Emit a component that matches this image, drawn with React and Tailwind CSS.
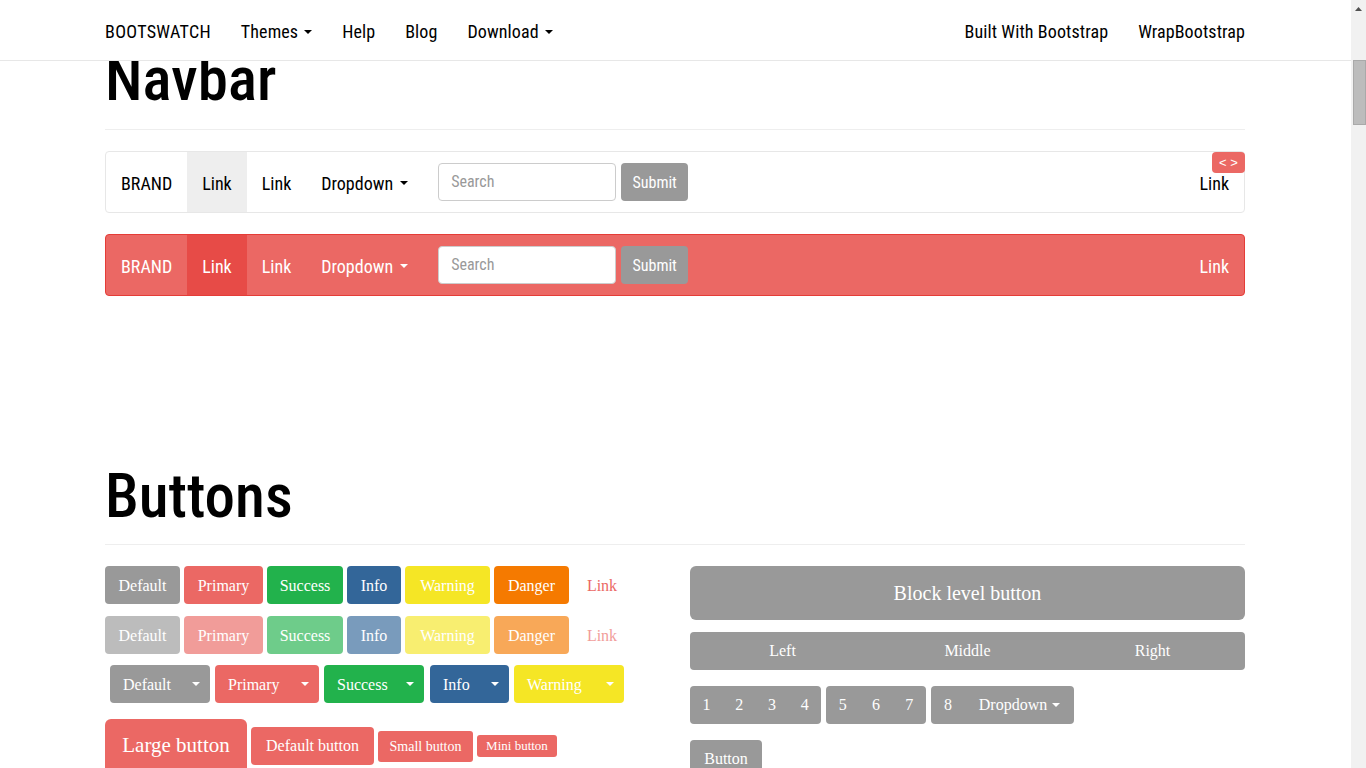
import React from "react";

const NARROW = "font-['Roboto_Condensed','Liberation_Sans',sans-serif]";
const SERIF = "font-['Liberation_Serif','DejaVu_Serif',serif]";

function Caret({ className = "" }) {
  return (
    <svg width="8" height="4" viewBox="0 0 8 4" className={"inline-block " + className}>
      <path d="M0 0 L8 0 L4 4 Z" fill="currentColor" />
    </svg>
  );
}

function Btn({ w, bg, children, className = "" }) {
  return (
    <div
      className={`${w} ${bg} h-[38px] rounded-[4px] flex items-center justify-center text-white text-[16px] pt-[1px] ${className}`}
    >
      {children}
    </div>
  );
}

function SplitBtn({ w, bg, label, className = "" }) {
  return (
    <div className={`${w} ${bg} h-[38px] rounded-[4px] flex items-center text-white text-[16px] ${className}`}>
      <span className="flex-1 pl-[13px] pt-[1px]">{label}</span>
      <span className="w-[27px] flex items-center justify-center pr-[2px]">
        <Caret />
      </span>
    </div>
  );
}

function ButtonRow({ faded }) {
  const o = faded ? "opacity-[0.65]" : "";
  return (
    <div className={`flex gap-[4px] ${o}`}>
      <Btn w="w-[75px]" bg="bg-[#999999]">Default</Btn>
      <Btn w="w-[79px]" bg="bg-[#eb6864]">Primary</Btn>
      <Btn w="w-[76px]" bg="bg-[#22b24c]">Success</Btn>
      <Btn w="w-[54px]" bg="bg-[#336699]">Info</Btn>
      <Btn w="w-[85px]" bg="bg-[#f5e625]">Warning</Btn>
      <Btn w="w-[75px]" bg="bg-[#f57a00]">Danger</Btn>
      <div className="w-[56px] h-[38px] flex items-center justify-center text-[#eb6864] text-[16px] ml-[1px] pt-[1px]">
        Link
      </div>
    </div>
  );
}

function DemoNavbar({ inverse }) {
  const wrap = inverse
    ? "bg-[#eb6864] border-[#e53c37] text-white"
    : "bg-white border-[#e7e7e7] text-black";
  const active = inverse ? "bg-[#e74b47]" : "bg-[#eeeeee]";
  return (
    <div className={`relative h-[62px] border rounded-[4px] flex items-stretch ${wrap} ${NARROW} font-normal text-[18px]`}>
      <div className="px-[15px] pt-[2px] flex items-center">BRAND</div>
      <div className={`px-[15px] pt-[2px] flex items-center ${active}`}>Link</div>
      <div className="px-[15px] pt-[2px] flex items-center">Link</div>
      <div className="px-[15px] pt-[2px] flex items-center gap-[7px]">
        Dropdown <Caret className={inverse ? "text-white" : "text-black"} />
      </div>
      <div className="ml-[15px] flex items-center gap-[5px]">
        <div className="w-[178px] h-[38px] rounded-[4px] border border-[#cccccc] bg-white flex items-center pl-[12px] text-[#999999] text-[16px]">
          Search
        </div>
        <div className="w-[67px] h-[38px] rounded-[4px] bg-[#999999] flex items-center justify-center pt-[2px] text-white text-[16px]">
          Submit
        </div>
      </div>
      <div className="flex-1" />
      <div className="px-[15px] pt-[2px] flex items-center">Link</div>
      {!inverse && (
        <div className="absolute top-0 right-[-1px] w-[33px] h-[21px] rounded-[4px] bg-[#eb6864] text-white text-[13px] flex items-center justify-center font-['Liberation_Sans',sans-serif]">
          &lt; &gt;
        </div>
      )}
    </div>
  );
}

export default function App() {
  return (
    <div className="w-[1366px] h-[768px] overflow-hidden flex bg-white">
      <div className="relative w-[1351px] h-[768px] overflow-hidden">
        {/* fixed top navbar */}
        <div className={`absolute top-0 left-0 right-0 z-10 h-[61px] bg-white border-b border-[#e7e7e7] ${NARROW} font-normal text-[18px] tracking-[0.1px] text-black`}>
          <div className="w-[1140px] ml-[105px] h-[60px] pt-[3px] flex items-center">
            <div className="pr-[15px] tracking-[0.3px]">BOOTSWATCH</div>
            <div className="px-[15px] flex items-center gap-[6px]">
              Themes <Caret />
            </div>
            <div className="px-[15px]">Help</div>
            <div className="px-[15px]">Blog</div>
            <div className="px-[15px] flex items-center gap-[6px]">
              Download <Caret />
            </div>
            <div className="flex-1" />
            <div className="px-[15px]">Built With Bootstrap</div>
            <div className="pl-[15px]">WrapBootstrap</div>
          </div>
        </div>

        {/* page content */}
        <div className="w-[1140px] ml-[105px]">
          <h1 className={`${NARROW} font-medium text-[61px] leading-[61px] text-black mt-[49px]`}>Navbar</h1>
          <div className="mt-[19px] border-t border-[#eeeeee]" />
          <div className="mt-[21px]">
            <DemoNavbar />
          </div>
          <div className="mt-[21px]">
            <DemoNavbar inverse />
          </div>

          <h1 className={`${NARROW} font-medium text-[61px] leading-[61px] text-black mt-[170px]`}>Buttons</h1>
          <div className="mt-[17px] border-t border-[#eeeeee]" />

          <div className={`mt-[21px] flex ${SERIF}`}>
            <div className="w-[555px] flex flex-col">
              <ButtonRow />
              <div className="mt-[12px]">
                <ButtonRow faded />
              </div>
              <div className="mt-[11px] ml-[5px] flex gap-[5px]">
                <SplitBtn w="w-[100px]" bg="bg-[#999999]" label="Default" />
                <SplitBtn w="w-[104px]" bg="bg-[#eb6864]" label="Primary" />
                <SplitBtn w="w-[100px]" bg="bg-[#22b24c]" label="Success" />
                <SplitBtn w="w-[79px]" bg="bg-[#336699]" label="Info" className="ml-[1px]" />
                <SplitBtn w="w-[110px]" bg="bg-[#f5e625]" label="Warning" />
              </div>
              <div className="mt-[16px] flex items-center gap-[4px] text-white">
                <div className="w-[142px] h-[54px] rounded-[6px] bg-[#eb6864] flex items-center justify-center text-[21px]">
                  Large button
                </div>
                <div className="w-[123px] h-[38px] rounded-[4px] bg-[#eb6864] flex items-center justify-center text-[16px]">
                  Default button
                </div>
                <div className="w-[95px] h-[31px] rounded-[3px] bg-[#eb6864] flex items-center justify-center text-[14px]">
                  Small button
                </div>
                <div className="w-[80px] h-[22px] rounded-[3px] bg-[#eb6864] flex items-center justify-center text-[13px]">
                  Mini button
                </div>
              </div>
            </div>

            <div className="w-[555px] ml-[30px] flex flex-col text-white">
              <div className="h-[54px] rounded-[6px] bg-[#999999] flex items-center justify-center text-[20px]">
                Block level button
              </div>
              <div className="mt-[12px] h-[38px] rounded-[4px] bg-[#999999] flex text-[16px]">
                <div className="flex-1 flex items-center justify-center">Left</div>
                <div className="flex-1 flex items-center justify-center">Middle</div>
                <div className="flex-1 flex items-center justify-center">Right</div>
              </div>
              <div className="mt-[16px] flex gap-[5px] text-[16px]">
                <div className="w-[131px] h-[38px] rounded-[4px] bg-[#999999] flex">
                  {["1", "2", "3", "4"].map((n) => (
                    <div key={n} className="flex-1 flex items-center justify-center">{n}</div>
                  ))}
                </div>
                <div className="w-[100px] h-[38px] rounded-[4px] bg-[#999999] flex">
                  {["5", "6", "7"].map((n) => (
                    <div key={n} className="flex-1 flex items-center justify-center">{n}</div>
                  ))}
                </div>
                <div className="w-[143px] h-[38px] rounded-[4px] bg-[#999999] flex">
                  <div className="w-[34px] flex items-center justify-center">8</div>
                  <div className="flex-1 flex items-center justify-center gap-[5px]">
                    Dropdown <Caret />
                  </div>
                </div>
              </div>
              <div className="mt-[16px] w-[72px] h-[38px] rounded-[4px] bg-[#999999] flex items-center justify-center text-[16px]">
                Button
              </div>
            </div>
          </div>
        </div>
      </div>

      {/* scrollbar */}
      <div className="w-[15px] h-[768px] bg-[#f1f1f1] flex flex-col items-center">
        <div className="h-[17px] flex items-center justify-center">
          <svg width="7" height="4" viewBox="0 0 7 4">
            <path d="M0 4 L3.5 0 L7 4 Z" fill="#505050" />
          </svg>
        </div>
        <div className="mt-[43px] w-[13px] h-[65px] bg-[#bcbcbc] border border-[#a9a9a9] ml-[1px]" />
      </div>
    </div>
  );
}
